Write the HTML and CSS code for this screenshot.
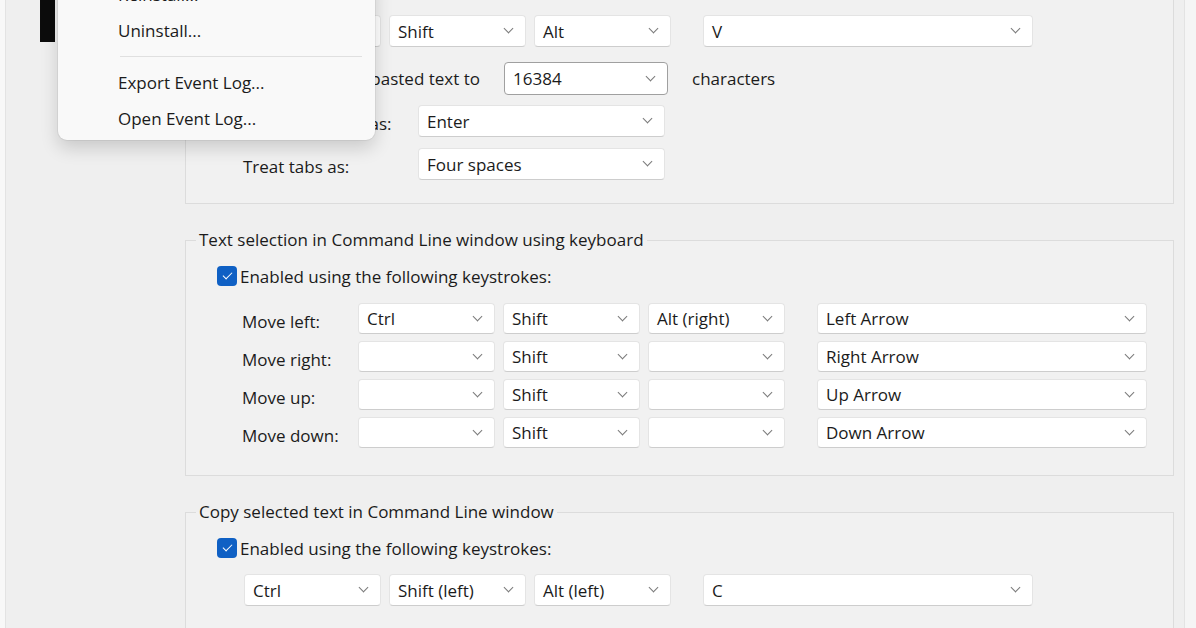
FILE: index.html
```html
<!DOCTYPE html>
<html lang="en">
<head>
    <meta charset="UTF-8">
    <meta name="viewport" content="width=device-width, initial-scale=1.0">
    <title>Command Line Settings</title>
    <link rel="stylesheet" href="styles.css">
</head>
<body>
    <div class="window">
        <div class="edge"></div>
        <aside class="sidebar">
            <div class="thumb"></div>
        </aside>

        <main class="settings">
            <fieldset class="group paste">
                <legend>Paste to Command Line window</legend>
                <div class="check-row"><span class="checkbox"></span>Enabled using the following keystrokes:</div>
                <div class="keys">
                    <div class="combo mod">Ctrl</div>
                    <div class="combo mod">Shift</div>
                    <div class="combo mod">Alt</div>
                    <div class="combo key">V</div>
                </div>
                <div class="field-row limit">
                    <div class="limit-label"><span class="checkbox"></span><span class="text">Truncate pasted text to</span></div>
                    <div class="combo edit">16384</div>
                    <span class="unit">characters</span>
                </div>
                <div class="field-row">
                    <span class="field-label">Treat line feeds as:</span>
                    <div class="combo wide">Enter</div>
                </div>
                <div class="field-row">
                    <span class="field-label">Treat tabs as:</span>
                    <div class="combo wide">Four spaces</div>
                </div>
            </fieldset>

            <fieldset class="group">
                <legend>Text selection in Command Line window using keyboard</legend>
                <div class="check-row"><span class="checkbox"></span>Enabled using the following keystrokes:</div>
                <div class="move-list">
                    <div class="keys move">
                        <span class="move-label">Move left:</span>
                        <div class="combo mod">Ctrl</div>
                        <div class="combo mod">Shift</div>
                        <div class="combo mod">Alt (right)</div>
                        <div class="combo key">Left Arrow</div>
                    </div>
                    <div class="keys move">
                        <span class="move-label">Move right:</span>
                        <div class="combo mod"></div>
                        <div class="combo mod">Shift</div>
                        <div class="combo mod"></div>
                        <div class="combo key">Right Arrow</div>
                    </div>
                    <div class="keys move">
                        <span class="move-label">Move up:</span>
                        <div class="combo mod"></div>
                        <div class="combo mod">Shift</div>
                        <div class="combo mod"></div>
                        <div class="combo key">Up Arrow</div>
                    </div>
                    <div class="keys move">
                        <span class="move-label">Move down:</span>
                        <div class="combo mod"></div>
                        <div class="combo mod">Shift</div>
                        <div class="combo mod"></div>
                        <div class="combo key">Down Arrow</div>
                    </div>
                </div>
            </fieldset>

            <fieldset class="group">
                <legend>Copy selected text in Command Line window</legend>
                <div class="check-row"><span class="checkbox"></span>Enabled using the following keystrokes:</div>
                <div class="keys">
                    <div class="combo mod">Ctrl</div>
                    <div class="combo mod">Shift (left)</div>
                    <div class="combo mod">Alt (left)</div>
                    <div class="combo key">C</div>
                </div>
            </fieldset>
        </main>

        <div class="scroll-edge"></div>
    </div>

    <div class="menu">
        <div class="menu-item">Reinstall...</div>
        <div class="menu-item">Uninstall...</div>
        <div class="menu-sep"></div>
        <div class="menu-item">Export Event Log...</div>
        <div class="menu-item">Open Event Log...</div>
    </div>
</body>
</html>
```

FILE: styles.css
```css
body {
    margin: 0;
    height: 628px;
    overflow: hidden;
    background: #efefef;
    color: #1b1b1b;
    font-family: "Open Sans", "Noto Sans", sans-serif;
    font-size: 17px;
    position: relative;
}
.window {
    display: flex;
    height: 628px;
}
.edge {
    width: 5px;
    background: #f8f8f8;
    border-right: 1px solid #e3e3e3;
}
.sidebar {
    width: 179px;
}
.thumb {
    margin-left: 34px;
    width: 15px;
    height: 42px;
    background: #0c0c0c;
}
.settings {
    flex: 1;
    padding-right: 10px;
}
.scroll-edge {
    width: 11px;
    background: #f5f5f5;
    border-left: 1px solid #e3e3e3;
}

/* group boxes */
.group {
    margin: 24px 0 0 0;
    padding: 0 0 27px 0;
    min-width: 0;
    border: 1px solid #dcdcdc;
    background: #f1f1f1;
}
.group.paste {
    margin-top: -59px;
    padding-bottom: 23px;
}
.group legend {
    margin-left: 10px;
    padding: 0 3px;
    line-height: 24px;
}
.check-row {
    display: flex;
    align-items: center;
    gap: 3px;
    height: 24px;
    margin-top: 12px;
    padding-left: 31px;
}
.checkbox {
    width: 20px;
    height: 20px;
    flex: none;
    border-radius: 4px;
    background: #0f60c4;
    display: flex;
    align-items: center;
    justify-content: center;
}
.checkbox::after {
    content: "";
    width: 8px;
    height: 4px;
    margin-top: -3px;
    border-left: 1.6px solid #fff;
    border-bottom: 1.6px solid #fff;
    transform: rotate(-45deg);
}

/* combo boxes */
.combo {
    display: flex;
    align-items: center;
    box-sizing: border-box;
    height: 32px;
    padding: 0 13px 0 8px;
    background: #fff;
    border: 1px solid #e4e4e4;
    border-bottom-color: #cdcdcd;
    border-radius: 4px;
    white-space: nowrap;
}
.combo::after {
    content: "";
    width: 6px;
    height: 6px;
    margin-left: auto;
    margin-top: -5px;
    border-right: 1.3px solid #7a7a7a;
    border-bottom: 1.3px solid #7a7a7a;
    transform: rotate(45deg);
}
.combo.mod {
    width: 137px;
}
.combo.key {
    width: 330px;
    margin-left: 24px;
}
.combo.wide {
    width: 247px;
}
.combo.edit {
    width: 164px;
    height: 33px;
    border: 1px solid #a0a0a0;
}

.keys {
    display: flex;
    gap: 8px;
    margin-top: 14px;
    padding-left: 58px;
}
.move-list {
    display: flex;
    flex-direction: column;
    gap: 7px;
    margin-top: 15px;
}
.keys.move {
    margin-top: 0;
    padding-left: 56px;
    align-items: center;
}
.keys.move .combo {
    height: 31px;
}
.move-label {
    width: 108px;
    padding-top: 6px;
}

.field-row {
    display: flex;
    align-items: center;
    margin-top: 10px;
    padding-left: 57px;
}
.field-row.limit {
    margin-top: 15px;
    padding-left: 31px;
}
.field-row + .field-row:last-child {
    margin-top: 11px;
}
.limit-label {
    display: flex;
    align-items: center;
    width: 263px;
    margin-right: 24px;
}
.limit-label .text {
    margin-left: auto;
    white-space: nowrap;
}
.unit {
    margin-left: 24px;
}
.field-label {
    width: 175px;
    padding-top: 4px;
}

/* context menu */
.menu {
    position: absolute;
    left: 58px;
    top: -27px;
    width: 317px;
    padding: 4px 0 3px;
    background: #f9f9f9;
    border-radius: 9px;
    box-shadow: 0 8px 18px rgba(0, 0, 0, 0.16), 0 0 0 1px rgba(0, 0, 0, 0.05);
}
.menu-item {
    height: 36px;
    line-height: 36px;
    padding-left: 60px;
}
.menu-sep {
    height: 1px;
    margin: 7px 13px 8px 62px;
    background: #e0e0e0;
}
```
